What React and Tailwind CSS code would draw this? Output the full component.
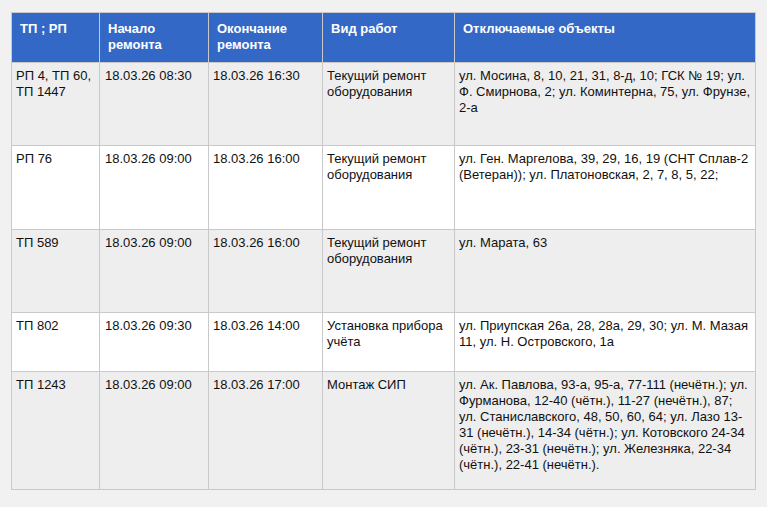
import React from 'react';

const rows = [
  {
    tp: 'РП 4, ТП 60, ТП 1447',
    start: '18.03.26 08:30',
    end: '18.03.26 16:30',
    kind: 'Текущий ремонт оборудования',
    objects: 'ул. Мосина, 8, 10, 21, 31, 8-д, 10; ГСК № 19; ул. Ф. Смирнова, 2; ул. Коминтерна, 75, ул. Фрунзе, 2-а',
    h: 'h-[83px]',
    bg: 'bg-[#eeeeee]',
  },
  {
    tp: 'РП 76',
    start: '18.03.26 09:00',
    end: '18.03.26 16:00',
    kind: 'Текущий ремонт оборудования',
    objects: 'ул. Ген. Маргелова, 39, 29, 16, 19 (СНТ Сплав-2 (Ветеран)); ул. Платоновская, 2, 7, 8, 5, 22;',
    h: 'h-[84px]',
    bg: 'bg-white',
  },
  {
    tp: 'ТП 589',
    start: '18.03.26 09:00',
    end: '18.03.26 16:00',
    kind: 'Текущий ремонт оборудования',
    objects: 'ул. Марата, 63',
    h: 'h-[83px]',
    bg: 'bg-[#eeeeee]',
  },
  {
    tp: 'ТП 802',
    start: '18.03.26 09:30',
    end: '18.03.26 14:00',
    kind: 'Установка прибора учёта',
    objects: 'ул. Приупская 26а, 28, 28а, 29, 30; ул. М. Мазая 11, ул. Н. Островского, 1а',
    h: 'h-[59px]',
    bg: 'bg-white',
  },
  {
    tp: 'ТП 1243',
    start: '18.03.26 09:00',
    end: '18.03.26 17:00',
    kind: 'Монтаж СИП',
    objects: 'ул. Ак. Павлова, 93-а, 95-а, 77-111 (нечётн.); ул. Фурманова, 12-40 (чётн.), 11-27 (нечётн.), 87; ул. Станиславского, 48, 50, 60, 64; ул. Лазо 13-31 (нечётн.), 14-34 (чётн.);  ул. Котовского 24-34 (чётн.), 23-31 (нечётн.); ул. Железняка, 22-34 (чётн.), 22-41 (нечётн.).',
    h: 'h-[118px]',
    bg: 'bg-[#eeeeee]',
  },
];

const headers = ['ТП ; РП', 'Начало ремонта', 'Окончание ремонта', 'Вид работ', 'Отключаемые объекты'];
const widths = ['w-[88px]', 'w-[109px]', 'w-[114px]', 'w-[132px]', 'w-[301px]'];

export default function App() {
  return (
    <div className="min-h-[507px] w-[767px] bg-[#f1f1f1] pt-[12px] pl-[11px] font-['Liberation_Sans',Arial,sans-serif] text-[13px] leading-[16px] text-[#111111]">
      <table className="w-[745px] table-fixed border-collapse border border-[#c9c9c9]">
        <thead>
          <tr className="h-[50px] bg-[#3468c6]">
            {headers.map((t, i) => (
              <th
                key={t}
                className={`${widths[i]} border border-[#c9c9c9] px-[8px] pt-[8px] pb-[6px] text-left align-top font-bold text-white`}
              >
                {t === 'Начало ремонта' ? (
                  <>Начало<br />ремонта</>
                ) : t === 'Окончание ремонта' ? (
                  <>Окончание<br />ремонта</>
                ) : (
                  t
                )}
              </th>
            ))}
          </tr>
        </thead>
        <tbody>
          {rows.map((r) => (
            <tr key={r.tp} className={`${r.h} ${r.bg}`}>
              <td className="border border-[#c9c9c9] px-[4px] pt-[5px] align-top">{r.tp}</td>
              <td className="border border-[#c9c9c9] px-[5px] pt-[5px] align-top">{r.start}</td>
              <td className="border border-[#c9c9c9] px-[4px] pt-[5px] align-top">{r.end}</td>
              <td className="border border-[#c9c9c9] px-[4px] pt-[5px] align-top">{r.kind}</td>
              <td className="border border-[#c9c9c9] px-[4px] pt-[5px] align-top">{r.objects}</td>
            </tr>
          ))}
        </tbody>
      </table>
    </div>
  );
}
